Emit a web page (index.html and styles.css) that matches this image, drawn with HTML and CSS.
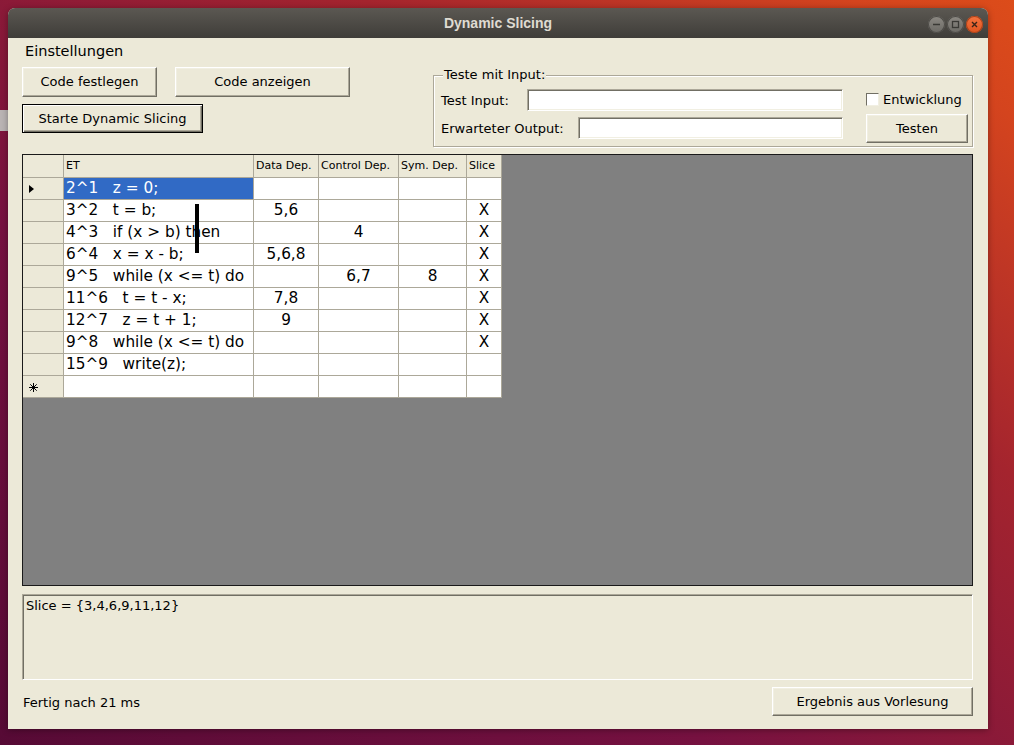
FILE: index.html
```html
<!DOCTYPE html>
<html>
<head>
<meta charset="utf-8">
<link rel="stylesheet" href="styles.css">
</head>
<body>
<div class="desktop">
  <div class="bg-item"></div>
  <div class="window">
    <div class="titlebar">
      <span class="title">Dynamic Slicing</span>
      <div class="wbtns">
        <span class="wbtn"><svg width="17" height="17" viewBox="0 0 17 17"><line x1="5" y1="8.5" x2="12" y2="8.5" stroke="#3a3935" stroke-width="1.5"/></svg></span>
        <span class="wbtn"><svg width="17" height="17" viewBox="0 0 17 17"><rect x="5.5" y="5.5" width="6" height="6" fill="none" stroke="#3a3935" stroke-width="1.3"/></svg></span>
        <span class="wbtn close"><svg width="17" height="17" viewBox="0 0 17 17"><path d="M6 6 L11 11 M11 6 L6 11" stroke="#3a2418" stroke-width="1.4"/></svg></span>
      </div>
    </div>
    <div class="content">
      <div class="menubar"><span>Einstellungen</span></div>
      <div class="top">
        <div class="btncol">
          <div class="btnrow">
            <button class="btn b-festlegen">Code festlegen</button>
            <button class="btn b-anzeigen">Code anzeigen</button>
          </div>
          <button class="btn default b-starte">Starte Dynamic Slicing</button>
        </div>
        <div class="groupbox">
          <span class="legend">Teste mit Input:</span>
          <div class="gb-left">
            <div class="gb-row"><span class="lbl">Test Input:</span><div class="input in-test"></div></div>
            <div class="gb-row second"><span class="lbl">Erwarteter Output:</span><div class="input in-out"></div></div>
          </div>
          <div class="gb-right">
            <div class="check"><span class="box"></span><span>Entwicklung</span></div>
            <button class="btn b-testen">Testen</button>
          </div>
        </div>
      </div>
      <div class="grid">
        <div class="table">
          <div class="hc rh"></div>
          <div class="hc">ET</div>
          <div class="hc">Data Dep.</div>
          <div class="hc">Control Dep.</div>
          <div class="hc">Sym. Dep.</div>
          <div class="hc">Slice</div>

          <div class="rh"><svg class="arrow" width="5" height="8" viewBox="0 0 5 8"><path d="M0 0 L5 4 L0 8 Z" fill="#000"/></svg></div>
          <div class="c et sel">2^1   z = 0;</div>
          <div class="c"></div><div class="c"></div><div class="c"></div><div class="c"></div>

          <div class="rh"></div>
          <div class="c et">3^2   t = b;</div>
          <div class="c">5,6</div><div class="c"></div><div class="c"></div><div class="c">X</div>

          <div class="rh"></div>
          <div class="c et">4^3   if (x &gt; b) then</div>
          <div class="c"></div><div class="c">4</div><div class="c"></div><div class="c">X</div>

          <div class="rh"></div>
          <div class="c et">6^4   x = x - b;</div>
          <div class="c">5,6,8</div><div class="c"></div><div class="c"></div><div class="c">X</div>

          <div class="rh"></div>
          <div class="c et">9^5   while (x &lt;= t) do</div>
          <div class="c"></div><div class="c">6,7</div><div class="c">8</div><div class="c">X</div>

          <div class="rh"></div>
          <div class="c et">11^6   t = t - x;</div>
          <div class="c">7,8</div><div class="c"></div><div class="c"></div><div class="c">X</div>

          <div class="rh"></div>
          <div class="c et">12^7   z = t + 1;</div>
          <div class="c">9</div><div class="c"></div><div class="c"></div><div class="c">X</div>

          <div class="rh"></div>
          <div class="c et">9^8   while (x &lt;= t) do</div>
          <div class="c"></div><div class="c"></div><div class="c"></div><div class="c">X</div>

          <div class="rh"></div>
          <div class="c et">15^9   write(z);</div>
          <div class="c"></div><div class="c"></div><div class="c"></div><div class="c"></div>

          <div class="rh"><svg class="star" width="9" height="9" viewBox="0 0 9 9"><path d="M4.5 0 V9 M0 4.5 H9 M1.3 1.3 L7.7 7.7 M7.7 1.3 L1.3 7.7" stroke="#000" stroke-width="1"/></svg></div>
          <div class="c et"></div>
          <div class="c"></div><div class="c"></div><div class="c"></div><div class="c"></div>
        </div>
        <div class="caret"></div>
      </div>
      <div class="output">Slice = {3,4,6,9,11,12}</div>
      <div class="bottom">
        <span class="status">Fertig nach 21 ms</span>
        <button class="btn b-ergebnis">Ergebnis aus Vorlesung</button>
      </div>
    </div>
  </div>
</div>
</body>
</html>
```

FILE: styles.css
```css
html, body {
  margin: 0;
  padding: 0;
}

body {
  width: 1014px;
  height: 745px;
  overflow: hidden;
  font-family: "DejaVu Sans", "Liberation Sans", sans-serif;
  font-size: 13px;
  color: #000;
}

.desktop {
  position: relative;
  width: 1014px;
  height: 745px;
  box-sizing: border-box;
  padding: 8px 0 0 8px;
  background: linear-gradient(to top right, #560a35 0%, #761140 35%, #a4242e 68%, #d4441e 92%, #dc4c1a 100%);
}

.bg-item {
  position: absolute;
  left: 0;
  top: 110px;
  width: 8px;
  height: 21px;
  background: #b9b3b3;
}

.window {
  position: relative;
  width: 980px;
  height: 721px;
  background: #ece9d8;
  border-radius: 7px 7px 0 0;
  overflow: hidden;
  display: flex;
  flex-direction: column;
  box-shadow: 0 1px 6px rgba(0, 0, 0, 0.35);
}

.titlebar {
  position: relative;
  flex: none;
  height: 30px;
  background: linear-gradient(#5b5852, #3f3d39);
  display: flex;
  align-items: center;
  justify-content: center;
}

.title {
  font-family: "Liberation Sans", sans-serif;
  font-weight: bold;
  font-size: 14px;
  color: #dfdbd2;
  margin-top: -1px;
}

.wbtns {
  position: absolute;
  right: 5px;
  top: 8px;
  display: flex;
  gap: 2px;
}

.wbtn {
  width: 17px;
  height: 17px;
  box-sizing: border-box;
  border-radius: 50%;
  background: linear-gradient(#8c8983, #6b6964);
  box-shadow: inset 0 0 0 1px #4d4b47;
  display: block;
}

.wbtn svg {
  display: block;
}

.wbtn.close {
  background: linear-gradient(#f47440, #e0541f);
  box-shadow: inset 0 0 0 1px #a8421a;
}

.content {
  flex: 1;
  display: flex;
  flex-direction: column;
  padding: 0 15px 13px 14px;
}

.menubar {
  height: 24px;
  flex: none;
  display: flex;
  align-items: center;
  padding: 2px 0 0 3px;
  box-sizing: border-box;
  font-size: 14.5px;
}

.top {
  height: 92px;
  flex: none;
  display: flex;
}

.btncol {
  padding-top: 5px;
  display: flex;
  flex-direction: column;
  align-items: flex-start;
}

.btnrow {
  display: flex;
  gap: 18px;
}

.btn {
  font-family: "DejaVu Sans", sans-serif;
  font-size: 13px;
  color: #000;
  background: #ece9d8;
  box-sizing: border-box;
  padding: 0;
  margin: 0;
  border: 1px solid;
  border-color: #ffffff #716f64 #716f64 #ffffff;
  box-shadow: inset -1px -1px 0 #aca899, inset 1px 1px 0 #f1efe2;
  display: flex;
  align-items: center;
  justify-content: center;
}

.btn.default {
  border: 1px solid #000;
  box-shadow: inset 1px 1px 0 #ffffff, inset -1px -1px 0 #716f64, inset -2px -2px 0 #aca899;
}

.b-festlegen { width: 135px; height: 30px; padding-bottom: 1px; }
.b-anzeigen { width: 175px; height: 30px; padding-bottom: 1px; }
.b-starte { width: 181px; height: 29px; margin-top: 7px; }
.b-testen { width: 102px; height: 29px; margin-top: 7px; }
.b-ergebnis { width: 201px; height: 29px; }

.groupbox {
  position: relative;
  margin-left: auto;
  margin-top: 13px;
  width: 540px;
  height: 72px;
  box-sizing: border-box;
  border: 1px solid #aca899;
  box-shadow: inset 1px 1px 0 #ffffff, 1px 1px 0 #ffffff;
  padding: 13px 0 0 7px;
  display: flex;
}

.legend {
  position: absolute;
  left: 9px;
  top: -9px;
  padding: 0 1px;
  background: #ece9d8;
  line-height: 16px;
}

.gb-left {
  width: 402px;
  display: flex;
  flex-direction: column;
}

.gb-row {
  height: 22px;
  display: flex;
  align-items: center;
}

.gb-row.second {
  margin-top: 6px;
}

.input {
  margin-left: auto;
  height: 22px;
  box-sizing: border-box;
  background: #fff;
  border: 1px solid;
  border-color: #aca899 #ffffff #ffffff #aca899;
  box-shadow: inset 1px 1px 0 #716f64, inset -1px -1px 0 #f1efe2;
}

.in-test { width: 316px; }
.in-out { width: 265px; }

.gb-right {
  margin-left: 23px;
  width: 102px;
  display: flex;
  flex-direction: column;
}

.check {
  margin-top: 2px;
  height: 16px;
  display: flex;
  align-items: center;
  gap: 4px;
  white-space: nowrap;
}

.box {
  width: 13px;
  height: 13px;
  box-sizing: border-box;
  background: #fff;
  border: 1px solid;
  border-color: #716f64 #f1efe2 #f1efe2 #716f64;
}

.grid {
  position: relative;
  flex: none;
  height: 432px;
  box-sizing: border-box;
  border: 1px solid #1a1a1a;
  background: #808080;
}

.table {
  display: grid;
  grid-template-columns: 41px 190px 65px 80px 68px 35px;
  grid-template-rows: 23px;
  grid-auto-rows: 22px;
  width: max-content;
}

.table > div {
  box-sizing: border-box;
  border-right: 1px solid #aca899;
  border-bottom: 1px solid #aca899;
}

.hc {
  background: #ece9d8;
  font-size: 11px;
  line-height: 21px;
  padding-left: 2px;
  white-space: nowrap;
  overflow: hidden;
}

.rh {
  background: #ece9d8;
  display: flex;
  align-items: center;
  padding-left: 6px;
}

.c {
  background: #fff;
  font-size: 15.3px;
  line-height: 21px;
  text-align: center;
  white-space: pre;
  overflow: hidden;
}

.c.et {
  text-align: left;
  padding-left: 2px;
}

.c.sel {
  background: #316ac5;
  color: #fff;
}

.arrow {
  display: block;
  margin-top: 1px;
}

.star {
  display: block;
  margin-top: 2px;
}

.caret {
  position: absolute;
  left: 172px;
  top: 49px;
  width: 4px;
  height: 49px;
  background: #000;
}

.output {
  flex: none;
  margin-top: 8px;
  height: 86px;
  box-sizing: border-box;
  border: 1px solid;
  border-color: #aca899 #ffffff #ffffff #aca899;
  box-shadow: inset 1px 1px 0 #716f64;
  padding: 3px 0 0 3px;
  font-size: 13px;
  line-height: 15px;
}

.bottom {
  flex: none;
  margin-top: 7px;
  height: 29px;
  display: flex;
  align-items: center;
  justify-content: space-between;
}

.status {
  padding-left: 1px;
  padding-top: 2px;
}
```
